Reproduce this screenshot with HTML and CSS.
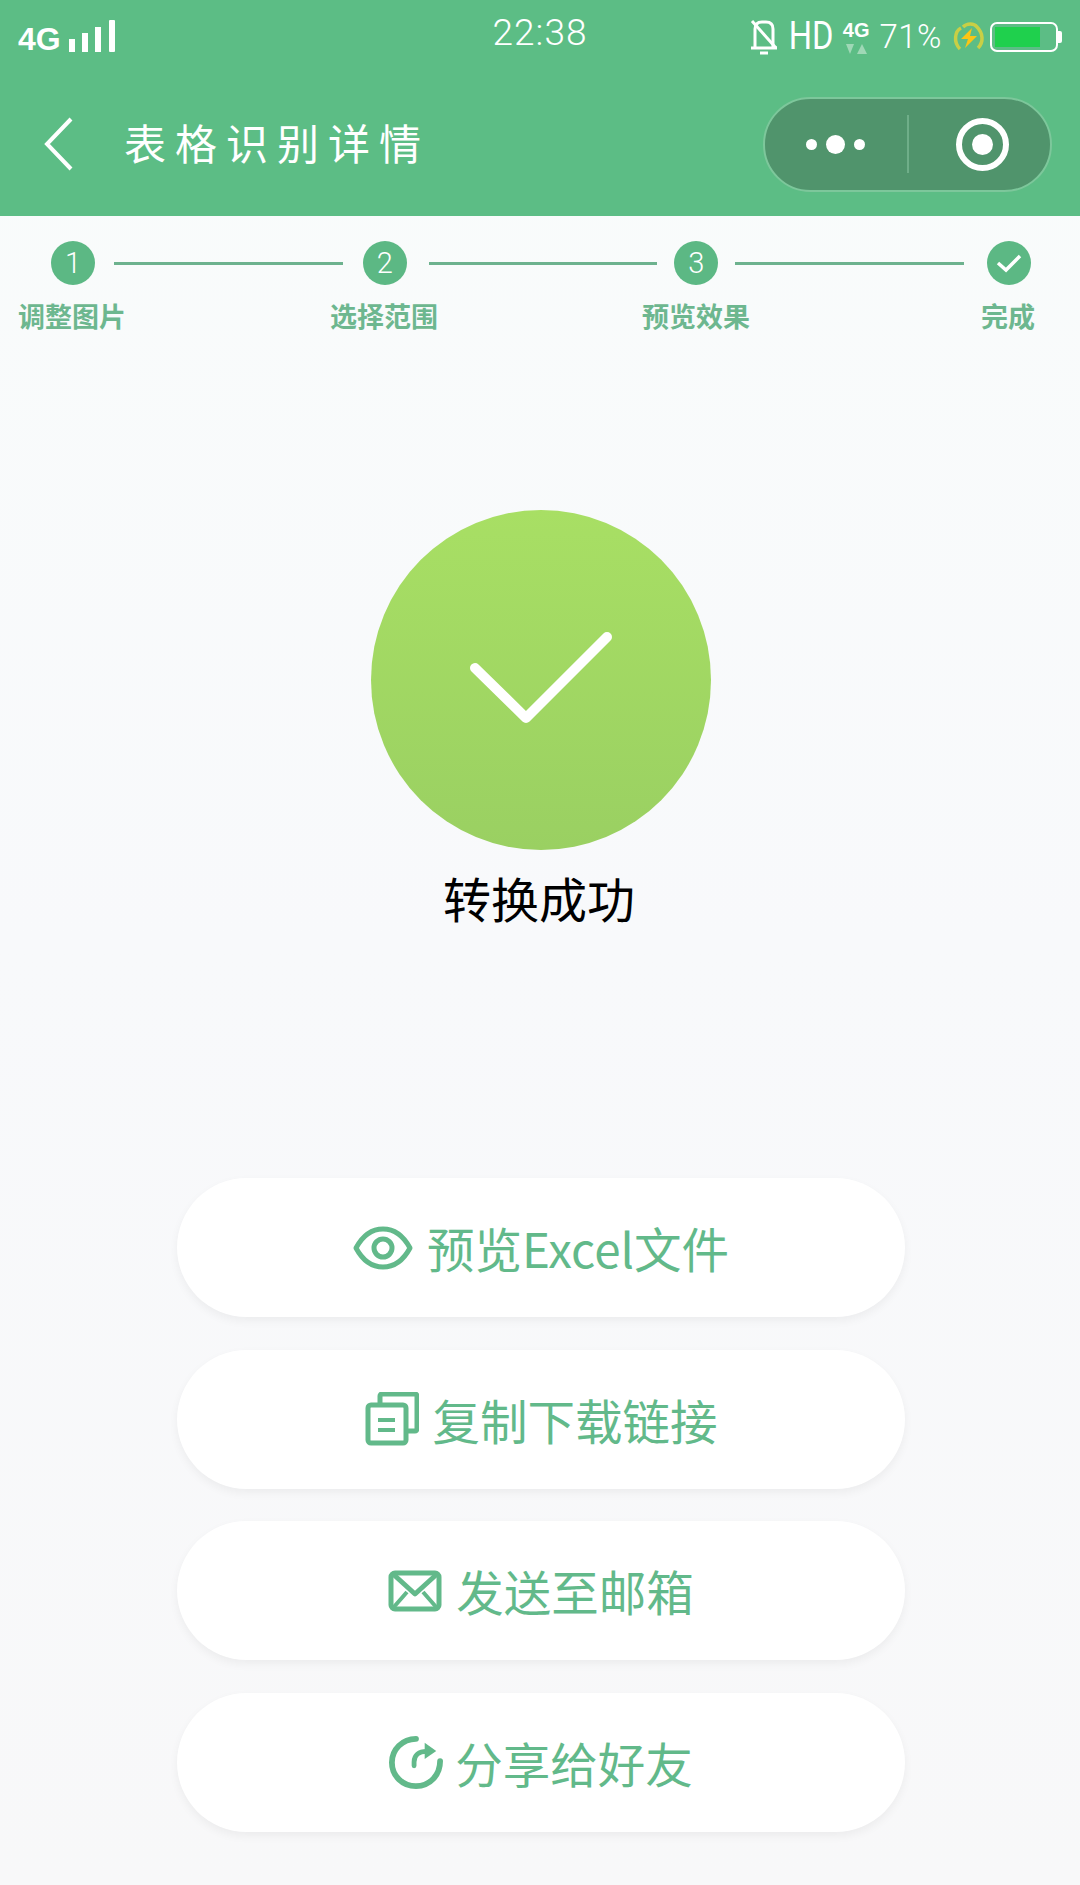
FILE: index.html
```html
<!DOCTYPE html>
<html lang="zh-CN">
<head>
    <meta charset="UTF-8">
    <meta name="viewport" content="width=device-width, initial-scale=1.0">
    <title>表格识别详情</title>
    <link rel="stylesheet" href="styles.css">
</head>
<body>
    <!-- Green header: phone status bar + mini program nav -->
    <header class="header">
        <div class="status-bar">
            <div class="status-left">
                <span class="net">4G</span>
                <svg class="signal" width="48" height="34" viewBox="0 0 48 34">
                    <rect x="1" y="20" width="6" height="13" fill="#fff"/>
                    <rect x="14" y="14" width="6" height="19" fill="#fff"/>
                    <rect x="27" y="8" width="6" height="25" fill="#fff"/>
                    <rect x="41" y="1" width="6" height="32" rx="1" fill="#fff"/>
                </svg>
            </div>
            <div class="status-time">22:38</div>
            <div class="status-right">
                <svg class="bell" width="28" height="36" viewBox="0 0 28 36" fill="none" stroke="#fff" stroke-width="3">
                    <path d="M5 28V10q0-7 7-7h4q7 0 7 7v18"/>
                    <path d="M1 29h26"/>
                    <path d="M10 34h8"/>
                    <path d="M2 2l24 27"/>
                </svg>
                <span class="hd">HD</span>
                <div class="net-small">
                    <span>4G</span>
                    <svg width="24" height="10" viewBox="0 0 24 10">
                        <path d="M2 0h8L6 10z" fill="#9fd8b6"/>
                        <path d="M18 0l5 10H13z" fill="#9fd8b6"/>
                    </svg>
                </div>
                <span class="percent">71%</span>
                <svg class="charge" width="32" height="30" viewBox="0 0 32 30" fill="none">
                    <path d="M7 27C0 20 2 9 8 6" stroke="#c9cf45" stroke-width="3.5"/>
                    <path d="M10 5c4-4 11-4 14 0 6 6 7 15 1 21" stroke="#c9cf45" stroke-width="3.5"/>
                    <path d="M19 6L8 17h7l-3 9 12-12h-7z" fill="#fbc515"/>
                </svg>
                <div class="battery">
                    <div class="battery-fill"></div>
                </div>
                <div class="battery-nub"></div>
            </div>
        </div>
        <nav class="nav">
            <svg class="back" width="30" height="54" viewBox="0 0 30 54" fill="none" stroke="#fff" stroke-width="4">
                <path d="M27 2L3 27l24 25"/>
            </svg>
            <h1>表格识别详情</h1>
            <div class="capsule">
                <div class="capsule-more">
                    <i class="dot"></i>
                    <i class="dot dot-big"></i>
                    <i class="dot"></i>
                </div>
                <div class="capsule-close"><i class="ring"></i></div>
            </div>
        </nav>
    </header>

    <!-- Steps -->
    <div class="steps">
        <div class="step-track">
            <div class="step-num">1</div>
            <div class="step-line step-line-a"></div>
            <div class="step-num">2</div>
            <div class="step-line step-line-b"></div>
            <div class="step-num">3</div>
            <div class="step-line step-line-c"></div>
            <div class="step-num">
                <svg width="26" height="20" viewBox="0 0 26 20" fill="none" stroke="#fff" stroke-width="3.5">
                    <path d="M2 10l8 7L24 3"/>
                </svg>
            </div>
        </div>
        <div class="step-labels">
            <span>调整图片</span>
            <span>选择范围</span>
            <span>预览效果</span>
            <span>完成</span>
        </div>
    </div>

    <!-- Result -->
    <div class="result">
        <div class="result-circle">
            <svg width="146" height="96" viewBox="0 0 146 96" fill="none" stroke="#fff" stroke-width="10" stroke-linecap="round" stroke-linejoin="round">
                <path d="M7 36l51 50 81-81"/>
            </svg>
        </div>
        <p class="result-text">转换成功</p>
    </div>

    <div class="actions">
        <a class="action">
            <svg class="action-icon" width="60" height="44" viewBox="0 0 60 44" fill="none" stroke="#62b98a" stroke-width="5">
                <path d="M3 22C10 9 20 3 30 3s20 6 27 19c-7 13-17 19-27 19S10 35 3 22z" stroke-linejoin="round"/>
                <circle cx="30" cy="22" r="9"/>
            </svg>
            <span>预览Excel文件</span>
        </a>
        <a class="action">
            <svg class="action-icon" width="54" height="54" viewBox="0 0 54 54" fill="none" stroke="#62b98a" stroke-width="5" stroke-linejoin="round">
                <path d="M15 12V4a2 2 0 0 1 2-2h33a2 2 0 0 1 2 2v33a2 2 0 0 1-2 2h-9"/>
                <rect x="3" y="13" width="38" height="38" rx="3"/>
                <path d="M13 28h17M13 38h17" stroke-width="4"/>
            </svg>
            <span>复制下载链接</span>
        </a>
        <a class="action">
            <svg class="action-icon" width="54" height="42" viewBox="0 0 54 42" fill="none" stroke="#62b98a" stroke-width="5" stroke-linejoin="round">
                <rect x="3" y="3" width="48" height="36" rx="4"/>
                <path d="M5 4l22 20L49 4"/>
                <path d="M5 38l14-16M49 38L35 22" stroke-width="4"/>
            </svg>
            <span>发送至邮箱</span>
        </a>
        <a class="action action-share">
            <svg class="action-icon" width="54" height="56" viewBox="0 0 56 56" fill="none" stroke="#62b98a" stroke-width="6" stroke-linecap="round">
                <path d="M28 4C14 4 3 15 3 28.500c0 14 11 24.500 25 24.500 15 0 25-12 25-26"/>
                <path d="M26 32v-4c0-7 5-11 13-11" stroke-width="5"/>
                <path d="M37 8l12 8.500-12 8.500z" fill="#62b98a" stroke="none"/>
            </svg>
            <span>分享给好友</span>
        </a>
    </div>
</body>
</html>
```

FILE: styles.css
```css
* {
    margin: 0;
    padding: 0;
    box-sizing: border-box;
}

body {
    font-family: "Noto Sans CJK SC", "Noto Sans", sans-serif;
    background: linear-gradient(180deg, #f9fcfb 0%, #f8f9fb 50%, #f8f8f9 100%);
    width: 1080px;
    height: 1885px;
    overflow: hidden;
}

/* Header */
.header {
    background-color: #5cbd85;
    height: 216px;
    color: #ffffff;
}

.status-bar {
    position: relative;
    display: flex;
    justify-content: space-between;
    align-items: flex-start;
    height: 72px;
    padding: 0 18px 0 18px;
}

.status-left {
    display: flex;
    align-items: flex-end;
    height: 53px;
}

.net {
    font-family: "Liberation Sans", sans-serif;
    font-size: 32px;
    font-weight: 700;
    line-height: 24px;
    width: 50px;
    padding-bottom: 2px;
}

.signal {
    display: block;
}

.status-time {
    position: absolute;
    left: 0;
    right: 0;
    top: 13px;
    text-align: center;
    font-family: Roboto, sans-serif;
    font-weight: 300;
    font-size: 37px;
    line-height: 40px;
    letter-spacing: 1px;
}

.status-right {
    display: flex;
    align-items: center;
    height: 37px;
    margin-top: 18px;
}

.hd {
    font-family: Roboto, sans-serif;
    font-size: 38px;
    line-height: 37px;
    margin: 0 -4px 0 7px;
    transform: scaleX(0.86);
}

.net-small {
    display: flex;
    flex-direction: column;
    align-items: center;
    margin-left: 10px;
}

.net-small span {
    font-family: "Liberation Sans", sans-serif;
    font-size: 20px;
    font-weight: 700;
    line-height: 20px;
}

.net-small svg {
    display: block;
    margin-top: 4px;
}

.percent {
    font-family: Roboto, sans-serif;
    font-weight: 300;
    font-size: 33px;
    letter-spacing: 0.5px;
    margin-left: 10px;
}

.charge {
    margin-left: 11px;
}

.battery {
    width: 68px;
    height: 30px;
    margin-left: 5px;
    border: 2px solid #ffffff;
    border-radius: 7px;
    padding: 3px;
}

.battery-fill {
    width: 45px;
    height: 100%;
    background-color: #1fd04d;
}

.battery-nub {
    width: 4px;
    height: 12px;
    background-color: #ffffff;
    border-radius: 0 2px 2px 0;
}

/* Nav */
.nav {
    display: flex;
    align-items: center;
    height: 144px;
    padding: 0 28px 0 44px;
}

.back {
    display: block;
}

.nav h1 {
    font-size: 42px;
    font-weight: 400;
    letter-spacing: 9px;
    margin: 0 0 6px 50px;
    flex: 1;
}

.capsule {
    display: flex;
    align-items: center;
    width: 289px;
    height: 95px;
    background-color: #50946c;
    border: 2px solid #7dc79b;
    border-radius: 48px;
}

.capsule-more {
    display: flex;
    align-items: center;
    justify-content: center;
    gap: 9px;
    width: 144px;
    height: 58px;
    padding-right: 2px;
    border-right: 2px solid #6fae89;
}

.dot {
    display: block;
    width: 11px;
    height: 11px;
    border-radius: 50%;
    background-color: #ffffff;
}

.dot-big {
    width: 19px;
    height: 19px;
}

.capsule-close {
    flex: 1;
    display: flex;
    justify-content: center;
    padding-left: 6px;
}

.ring {
    position: relative;
    display: block;
    width: 53px;
    height: 53px;
    border: 6px solid #ffffff;
    border-radius: 50%;
}

.ring::after {
    content: '';
    position: absolute;
    top: 10px;
    left: 10px;
    width: 21px;
    height: 21px;
    border-radius: 50%;
    background-color: #ffffff;
}

/* Steps */
.steps {
    padding-top: 25px;
}

.step-track {
    display: flex;
    align-items: center;
    padding: 0 49px 0 51px;
}

.step-num {
    display: flex;
    align-items: center;
    justify-content: center;
    flex: none;
    width: 44px;
    height: 44px;
    border-radius: 50%;
    background-color: #5cb884;
    color: #ffffff;
    font-family: Roboto, sans-serif;
    font-weight: 300;
    font-size: 29px;
}

.step-line {
    flex: 1;
    height: 3px;
    background-color: #6db28e;
}

.step-line-a {
    margin: 0 20px 0 19px;
}

.step-line-b {
    margin: 0 17px 0 22px;
}

.step-line-c {
    margin: 0 23px 0 17px;
}

.step-labels {
    display: grid;
    grid-template-columns: repeat(4, 144px);
    justify-content: space-between;
    margin-top: 13px;
}

.step-labels span {
    text-align: center;
    font-size: 27px;
    font-weight: 700;
    line-height: 36px;
    color: #6db78f;
}

/* Result */
.result {
    display: flex;
    flex-direction: column;
    align-items: center;
    margin-top: 176px;
    padding-left: 2px;
}

.result-circle {
    display: flex;
    align-items: center;
    justify-content: center;
    width: 340px;
    height: 340px;
    border-radius: 50%;
    background: linear-gradient(180deg, #a8df64 0%, #9ad062 100%);
}

.result-text {
    margin: 14px 4px 0 0;
    font-size: 48px;
    line-height: 66px;
    color: #000000;
}

/* Actions */
.actions {
    display: flex;
    flex-direction: column;
    gap: 32.6px;
    width: 728px;
    margin: 248px 0 0 177px;
}

.action {
    display: flex;
    align-items: center;
    justify-content: center;
    gap: 14px;
    height: 139px;
    background-color: #ffffff;
    border-radius: 70px;
    box-shadow: 0 4px 10px rgba(0, 0, 0, 0.05);
    color: #62b98a;
    font-size: 47.5px;
    font-weight: 400;
}

.action-share {
    gap: 12px;
}

.action-icon {
    display: block;
    flex: none;
}
```
